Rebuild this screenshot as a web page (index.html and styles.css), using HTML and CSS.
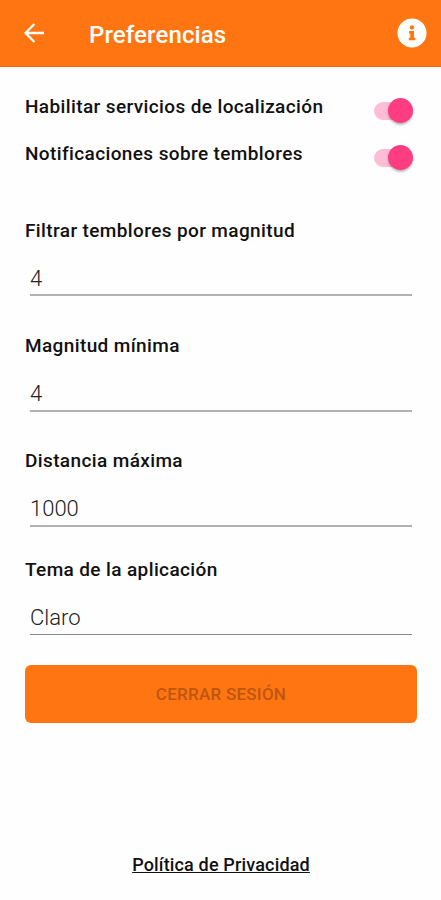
FILE: index.html
```html
<!DOCTYPE html>
<html lang="es">
<head>
    <meta charset="UTF-8">
    <meta name="viewport" content="width=device-width, initial-scale=1.0">
    <title>Preferencias</title>
    <link rel="stylesheet" href="styles.css">
</head>
<body>
    <header class="top-bar">
        <a href="#" class="back" aria-label="Volver">
            <svg width="20" height="20" viewBox="0 0 20 20" fill="none" stroke="#fff" stroke-width="2.3">
                <path d="M20 10H1.8M10.4 1L1.5 10l8.9 9"/>
            </svg>
        </a>
        <h1>Preferencias</h1>
        <a href="#" class="info" aria-label="Información">
            <svg width="30" height="30" viewBox="0 0 30 30">
                <circle cx="15" cy="15" r="14.5" fill="#fff"/>
                <circle cx="15" cy="9.4" r="2.2" fill="#ff7512"/>
                <path d="M12 12.9h5v6.9h1.4v2.5h-6.6v-2.5h1.4v-4.4H12z" fill="#ff7512"/>
            </svg>
        </a>
    </header>

    <main>
        <div class="switch-row">
            <label for="location">Habilitar servicios de localización</label>
            <input type="checkbox" id="location" class="switch" checked>
        </div>
        <div class="switch-row">
            <label for="notifications">Notificaciones sobre temblores</label>
            <input type="checkbox" id="notifications" class="switch" checked>
        </div>

        <form class="fields">
            <div class="field">
                <label for="filter">Filtrar temblores por magnitud</label>
                <input type="text" id="filter" value="4">
            </div>
            <div class="field">
                <label for="minimum">Magnitud mínima</label>
                <input type="text" id="minimum" value="4">
            </div>
            <div class="field">
                <label for="distance">Distancia máxima</label>
                <input type="text" id="distance" value="1000">
            </div>
            <div class="field theme">
                <label for="theme">Tema de la aplicación</label>
                <input type="text" id="theme" value="Claro">
            </div>
            <button type="button">CERRAR SESIÓN</button>
        </form>
    </main>

    <footer>
        <a href="#">Política de Privacidad</a>
    </footer>
</body>
</html>
```
FILE: styles.css
```css
* {
    box-sizing: border-box;
}
body {
    margin: 0;
    min-height: 900px;
    display: flex;
    flex-direction: column;
    background-color: #fefefe;
    color: #111;
    font-family: Roboto, sans-serif;
}

/* Top bar */
.top-bar {
    display: flex;
    align-items: center;
    height: 67px;
    padding: 0 14px 0 24px;
    background-color: #ff7512;
    border-bottom: 1px solid #f56a0a;
}
.top-bar svg {
    display: block;
}
.top-bar h1 {
    flex: 1;
    margin: 4px 0 0 45px;
    color: #fff;
    font-size: 24px;
    font-weight: 500;
    line-height: 30px;
    letter-spacing: 0.12px;
}

main {
    padding: 21px 24px 0 25px;
}
label {
    display: block;
    font-size: 19px;
    font-weight: 500;
    line-height: 24px;
    letter-spacing: 0.38px;
}

/* Switches */
.switch-row {
    display: flex;
    justify-content: space-between;
    height: 47px;
    padding-right: 4px;
}
.switch-row label {
    margin-top: 7px;
}
.switch {
    position: relative;
    appearance: none;
    width: 39px;
    height: 18px;
    margin: 14px 0 0;
    border-radius: 9px;
    background-color: #ffbcd5;
}
.switch::after {
    content: "";
    position: absolute;
    top: -4px;
    right: 0;
    width: 25px;
    height: 25px;
    border-radius: 50%;
    background-color: #ff3d80;
    box-shadow: 0 2px 2px rgba(0, 0, 0, 0.25);
}

/* Fields */
.fields {
    display: flex;
    flex-direction: column;
    gap: 37px;
    margin-top: 37px;
}
.field input {
    display: block;
    width: 382px;
    height: 42px;
    margin: 12px 0 0 5px;
    padding: 7px 0 0;
    border: none;
    border-bottom: 2px solid #b2b2b2;
    background: none;
    color: #222;
    font-family: inherit;
    font-size: 22px;
    font-weight: 300;
    outline: none;
}
.field:first-child input {
    height: 41px;
    margin-bottom: 1px;
    padding-top: 8px;
}
.field.theme {
    margin-top: -6px;
}
.field.theme input {
    border-bottom: 1px solid #888;
    height: 41px;
}
button {
    height: 58px;
    margin-top: -7px;
    padding: 0;
    border: none;
    border-radius: 6px;
    background-color: #ff7512;
    color: #bd570e;
    font-family: inherit;
    font-size: 17px;
    font-weight: 500;
    letter-spacing: 0.25px;
}

footer {
    margin-top: auto;
    padding-bottom: 23px;
    padding-left: 1px;
    text-align: center;
}
footer a {
    color: #111;
    font-size: 18px;
    font-weight: 500;
    line-height: 24px;
    letter-spacing: 0.16px;
}
```
